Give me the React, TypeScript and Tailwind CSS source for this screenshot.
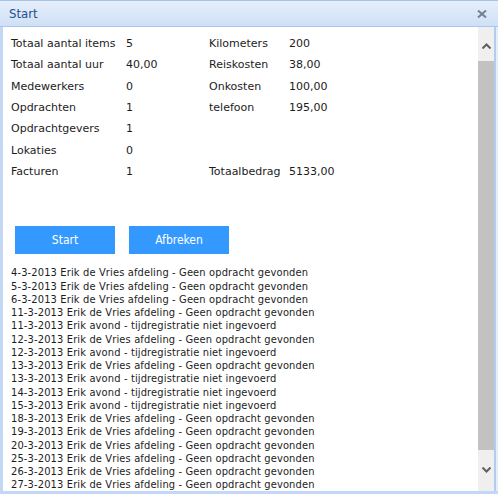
import React from 'react';

const summary: [string, string, string, string][] = [
  ['Totaal aantal items', '5', 'Kilometers', '200'],
  ['Totaal aantal uur', '40,00', 'Reiskosten', '38,00'],
  ['Medewerkers', '0', 'Onkosten', '100,00'],
  ['Opdrachten', '1', 'telefoon', '195,00'],
  ['Opdrachtgevers', '1', '', ''],
  ['Lokaties', '0', '', ''],
  ['Facturen', '1', 'Totaalbedrag', '5133,00'],
];

const afdeling = 'Erik de Vries afdeling - Geen opdracht gevonden';
const avond = 'Erik avond - tijdregistratie niet ingevoerd';

const log: string[] = [
  `4-3-2013 ${afdeling}`,
  `5-3-2013 ${afdeling}`,
  `6-3-2013 ${afdeling}`,
  `11-3-2013 ${afdeling}`,
  `11-3-2013 ${avond}`,
  `12-3-2013 ${afdeling}`,
  `12-3-2013 ${avond}`,
  `13-3-2013 ${afdeling}`,
  `13-3-2013 ${avond}`,
  `14-3-2013 ${avond}`,
  `15-3-2013 ${avond}`,
  `18-3-2013 ${afdeling}`,
  `19-3-2013 ${afdeling}`,
  `20-3-2013 ${afdeling}`,
  `25-3-2013 ${afdeling}`,
  `26-3-2013 ${afdeling}`,
  `27-3-2013 ${afdeling}`,
];

function Chevron({ up }: { up?: boolean }) {
  return (
    <svg width="9" height="6" viewBox="0 0 9 6" fill="none" stroke="#606060" strokeWidth="2">
      <polyline points={up ? '0.5 5.5 4.5 1.5 8.5 5.5' : '0.5 0.5 4.5 4.5 8.5 0.5'} />
    </svg>
  );
}

export default function App() {
  return (
    <div
      className="w-[498px] h-[494px] flex flex-col bg-[#c3d8f4] text-[11px] text-[#1c1c1c] overflow-hidden"
      style={{ fontFamily: '"DejaVu Sans Condensed", Tahoma, "DejaVu Sans", sans-serif' }}
    >
      {/* title bar */}
      <div className="h-[27px] shrink-0 flex items-center justify-between pl-[9px] pr-[11px] border-t border-[#a9c3e6] border-b border-b-[#a8c6ee] bg-gradient-to-b from-[#e6effb] to-[#cfe0f6]">
        <span className="text-[13px] text-[#1f4d8e]">Start</span>
        <svg width="10" height="8" viewBox="0 0 10 8" stroke="#6f8098" strokeWidth="2">
          <line x1="1" y1="0.5" x2="9" y2="7.5" />
          <line x1="9" y1="0.5" x2="1" y2="7.5" />
        </svg>
      </div>

      <div className="flex flex-1 min-h-0 pl-[3px] pb-[3px]">
        {/* content */}
        <div className="flex-1 bg-white overflow-hidden pt-[6.5px]">
          <div
            className="grid grid-cols-[115px_83px_80px_1fr] pl-[8px]"
            style={{ fontFamily: '"DejaVu Sans", Tahoma, sans-serif' }}
          >
            {summary.map((row, i) => (
              <React.Fragment key={i}>
                {row.map((cell, j) => (
                  <div key={j} className="h-[21.33px] flex items-center whitespace-nowrap">
                    {cell}
                  </div>
                ))}
              </React.Fragment>
            ))}
          </div>

          <div className="flex gap-[14px] pl-[12px] mt-[43.5px]">
            <button className="w-[100px] h-[28px] bg-[#3399ff] text-white text-[12px]">Start</button>
            <button className="w-[100px] h-[28px] bg-[#3399ff] text-white text-[12px]">Afbreken</button>
          </div>

          <div className="pl-[8px] mt-[12px] leading-[13.25px] tracking-[0.14px]">
            {log.map((line, i) => (
              <div key={i} className="whitespace-nowrap">
                {line}
              </div>
            ))}
          </div>
        </div>

        {/* scrollbar */}
        <div className="w-[16px] shrink-0 bg-[#efefef] flex flex-col">
          <div className="h-[34px] flex items-center justify-center pt-[4px]">
            <Chevron up />
          </div>
          <div className="flex-1 bg-[#c2c2c2]" />
          <div className="h-[41px] flex items-center justify-center pb-[2px]">
            <Chevron />
          </div>
        </div>
        <div className="w-[2px] shrink-0 bg-[#b4cdef]" />
        <div className="w-[2px] shrink-0 bg-[#e4edfa]" />
      </div>
    </div>
  );
}
